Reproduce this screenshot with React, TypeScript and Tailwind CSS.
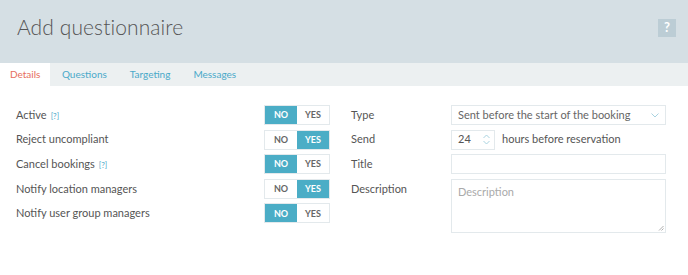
import React from "react";

type Row = { label: string; help?: boolean; value: boolean };

const rows: Row[] = [
  { label: "Active", help: true, value: false },
  { label: "Reject uncompliant", value: true },
  { label: "Cancel bookings", help: true, value: false },
  { label: "Notify location managers", value: true },
  { label: "Notify user group managers", value: false },
];

const tabs = ["Details", "Questions", "Targeting", "Messages"];

function Toggle({ on }: { on: boolean }) {
  return (
    <div className="flex h-5 w-[66px] border border-[#e3e9ec] text-[9px] font-bold">
      <div
        className={
          on
            ? "flex-1 flex items-center justify-center text-[#666] bg-white"
            : "flex-1 flex items-center justify-center text-white bg-[#4badc6]"
        }
      >
        NO
      </div>
      <div
        className={
          on
            ? "flex-1 flex items-center justify-center text-white bg-[#4badc6]"
            : "flex-1 flex items-center justify-center text-[#666] bg-white"
        }
      >
        YES
      </div>
    </div>
  );
}

export default function App() {
  return (
    <div className="w-[688px] h-[275px] bg-white font-['Lato',sans-serif] text-[#555]">
      <div className="h-[63px] bg-[#d5dfe4] flex items-center justify-between pl-[17px] pr-[12px]">
        <h1 className="text-[21px] font-light text-[#555] tracking-[0.1px] -mt-[9px]">
          Add questionnaire
        </h1>
        <div className="w-[18px] h-[18px] bg-[#bccdd5] text-white text-[13px] font-bold flex items-center justify-center -mt-[8px]">
          ?
        </div>
      </div>

      <div className="h-[23px] bg-[#ecf0f1] flex text-[10px]">
        {tabs.map((t, i) => (
          <div
            key={t}
            className={
              i === 0
                ? "px-[10px] flex items-center bg-white text-[#e66e5c]"
                : "px-[11.5px] flex items-center text-[#4aa9c9]"
            }
          >
            {t}
          </div>
        ))}
      </div>

      <div className="flex pl-[16px] pt-[19px] text-[11px]">
        <div className="w-[314px] flex flex-col gap-[4.6px]">
          {rows.map((r) => (
            <div key={r.label} className="flex items-center justify-between h-5">
              <span>
                {r.label}
                {r.help && (
                  <span className="ml-[4px] text-[8px] text-[#4aa9c9]">[?]</span>
                )}
              </span>
              <Toggle on={r.value} />
            </div>
          ))}
        </div>

        <div className="ml-[21px] w-[315px] flex flex-col gap-[4.6px]">
          <div className="flex items-center h-5">
            <span className="w-[100px]">Type</span>
            <div className="flex-1 h-5 border border-[#e3e9ec] flex items-center justify-between pl-[6px] pr-[6px] text-[#666]">
              <span>Sent before the start of the booking</span>
              <svg width="8" height="5" viewBox="0 0 8 5" fill="none">
                <path d="M0.5 0.5 L4 4 L7.5 0.5" stroke="#a9d3e0" strokeWidth="1" />
              </svg>
            </div>
          </div>

          <div className="flex items-center h-5">
            <span className="w-[100px]">Send</span>
            <div className="w-[44px] h-5 border border-[#e3e9ec] flex items-center justify-between pl-[6px] pr-[4px] text-[#555]">
              <span>24</span>
              <svg width="7" height="11" viewBox="0 0 7 11" fill="none">
                <path d="M0.5 4 L3.5 1 L6.5 4" stroke="#a9d3e0" strokeWidth="1" />
                <path d="M0.5 7 L3.5 10 L6.5 7" stroke="#a9d3e0" strokeWidth="1" />
              </svg>
            </div>
            <span className="ml-[7px]">hours before reservation</span>
          </div>

          <div className="flex items-center h-5">
            <span className="w-[100px]">Title</span>
            <div className="flex-1 h-5 border border-[#e3e9ec]" />
          </div>

          <div className="flex items-start">
            <span className="w-[100px] leading-5">Description</span>
            <div className="relative flex-1 h-[54px] border border-[#e3e9ec] pl-[6px] pt-[4px] text-[#aaa]">
              Description
              <svg
                className="absolute right-[1px] bottom-[1px]"
                width="6"
                height="6"
                viewBox="0 0 6 6"
              >
                <path d="M1 5.5 L5.5 1 M3.5 5.5 L5.5 3.5" stroke="#999" strokeWidth="0.8" />
              </svg>
            </div>
          </div>
        </div>
      </div>
    </div>
  );
}
